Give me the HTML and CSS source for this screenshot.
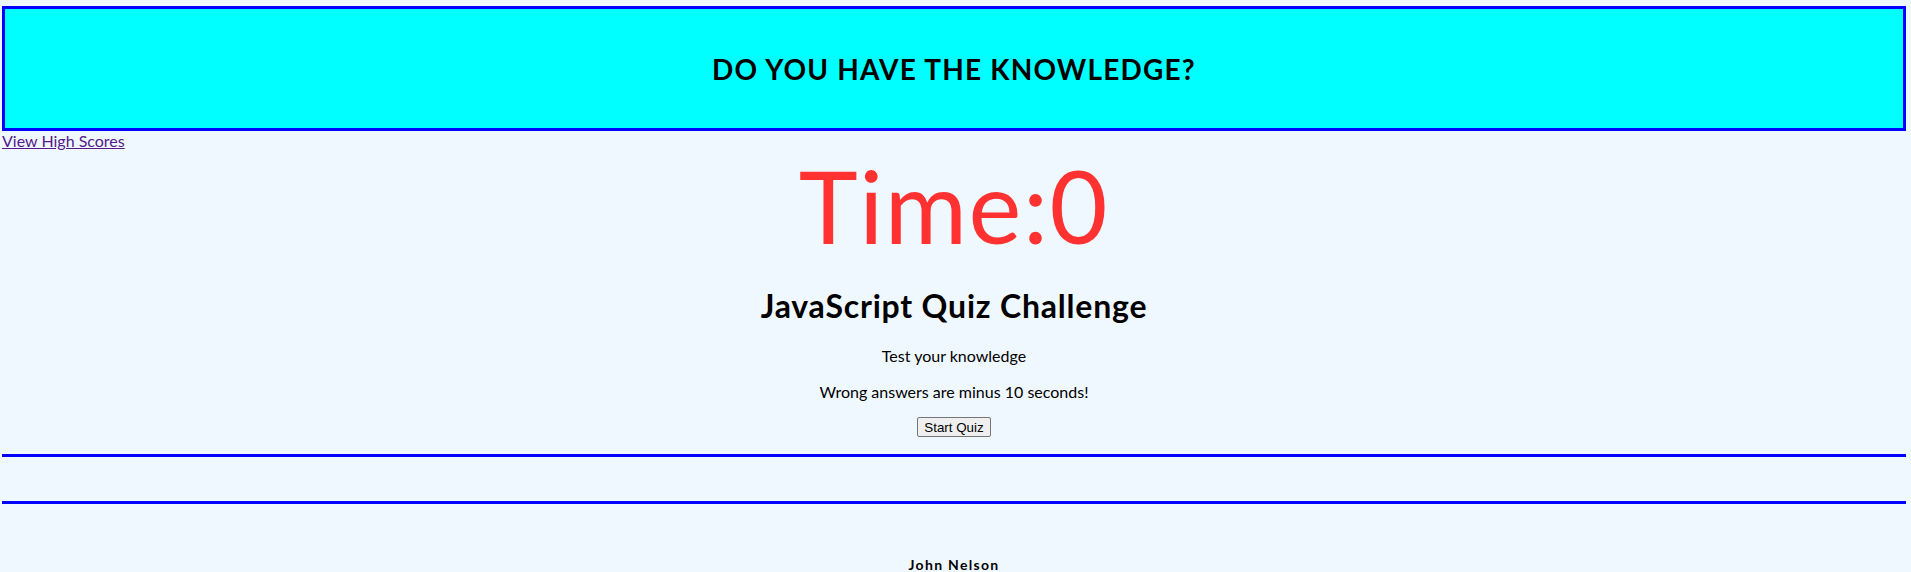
FILE: index.html
```html
<!DOCTYPE html>
<html lang="en">
<head>
<meta charset="utf-8">
<title>JavaScript Quiz Challenge</title>
<link rel="stylesheet" href="styles.css">
</head>
<body>
<header class="banner"><h2 class="banner-title">DO YOU HAVE THE KNOWLEDGE?</h2></header>
<a class="scores" href="#">View High Scores</a>
<main class="quiz">
  <div class="timer">Time:0</div>
  <h1 class="quiz-title">JavaScript Quiz Challenge</h1>
  <p class="intro first">Test your knowledge</p>
  <p class="intro second">Wrong answers are minus 10 seconds!</p>
  <button class="start" type="button">Start Quiz</button>
</main>
<hr class="rule first-rule">
<hr class="rule second-rule">
<footer class="credit">John Nelson</footer>
</body>
</html>
```
FILE: styles.css
```css
html, body {
  background: #f0f8ff;
}
body {
  margin: 6px 5px 0 2px;
  font-family: Lato, "Open Sans", sans-serif;
  color: #000;
  display: flex;
  flex-direction: column;
}
.banner {
  height: 119px;
  border: 3px solid #0000ff;
  background: #00ffff;
  display: flex;
  align-items: center;
  justify-content: center;
}
.banner-title {
  margin: 0;
  font-size: 28px;
  font-weight: 700;
  line-height: 34px;
  letter-spacing: 1.2px;
}
.scores {
  align-self: flex-start;
  font-size: 16px;
  line-height: 19px;
  color: #551a8b;
  text-decoration: underline;
}
.quiz {
  display: flex;
  flex-direction: column;
  align-items: center;
}
.timer {
  margin-top: 5px;
  font-size: 100px;
  line-height: 100px;
  letter-spacing: 1.6px;
  color: #ff3131;
}
.quiz-title {
  margin: 31px 0 0;
  font-size: 32px;
  line-height: 40px;
  font-weight: 700;
  letter-spacing: 0.8px;
}
.intro {
  margin: 0;
  font-size: 16px;
  line-height: 20px;
}
.intro.first { margin-top: 20px; }
.intro.second { margin-top: 16px; }
.start {
  margin-top: 15px;
  height: 20px;
  padding: 0 6px;
  font-family: Arial, "Liberation Sans", sans-serif;
  font-size: 13.33px;
  background: #efefef;
  border: 1px solid #767676;
  border-radius: 2px;
  color: #000;
}
.rule {
  margin: 0;
  height: 0;
  border: 0;
  border-top: 3px solid #0000ff;
  width: 100%;
}
.first-rule { margin-top: 17px; }
.second-rule { margin-top: 44px; }
.credit {
  margin-top: 52px;
  text-align: center;
  font-size: 14px;
  line-height: 17px;
  font-weight: 700;
  letter-spacing: 1.3px;
}
```
